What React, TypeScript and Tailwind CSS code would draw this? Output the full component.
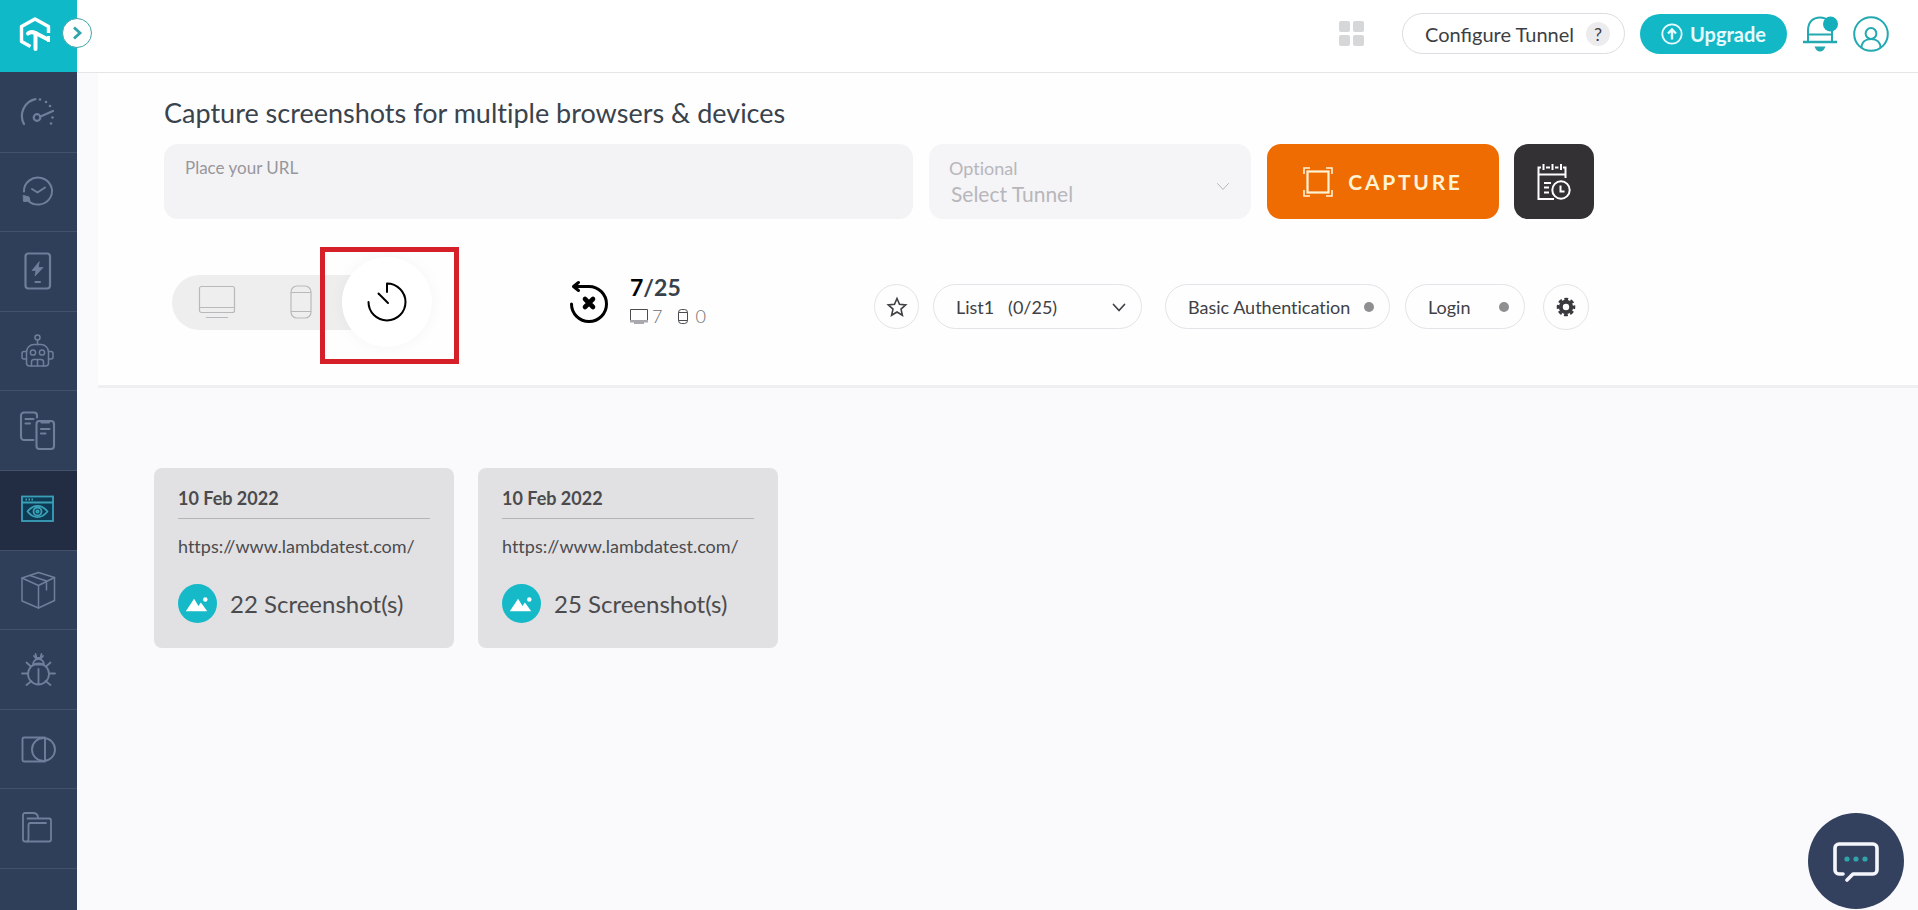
import type { ReactNode } from 'react';

type NavItem = { label: string; icon: ReactNode; active?: boolean };

const NAV_ITEMS: NavItem[] = [
  {
    label: 'Dashboard',
    icon: (
      <g strokeWidth="2.2">
        <path d="M6 32A17 17 0 0 1 17.5 7.2" />
        <circle cx="19" cy="25.5" r="3.3" />
        <path d="M22.5 24.5 35 19" />
        <g fill="currentColor" stroke="none">
          <circle cx="22" cy="7.5" r="1.3" />
          <circle cx="28" cy="10" r="1.3" />
          <circle cx="32" cy="14" r="1.3" />
          <circle cx="34.5" cy="25.5" r="1.3" />
          <circle cx="33" cy="31.5" r="1.3" />
        </g>
      </g>
    ),
  },
  {
    label: 'Real time testing',
    icon: (
      <g strokeWidth="2">
        <path d="M6 19.5A14 13.5 0 1 1 10.5 29" />
        <path d="M14 17l5.5 3.5L27 15.5" />
        <path d="M5.5 23.500 11 25l1 4-6 .5z" fill="currentColor" stroke="currentColor" strokeWidth="1" />
      </g>
    ),
  },
  {
    label: 'Real device',
    icon: (
      <g strokeWidth="2.2">
        <rect x="7.5" y="2.5" width="24.5" height="35" rx="3" />
        <path d="M21 11l-7 8.500h4L17 25l8-8.500h-4.500z" fill="currentColor" strokeWidth="0.8" />
        <path d="M17.5 31h4.500" />
      </g>
    ),
  },
  {
    label: 'Automation',
    icon: (
      <g strokeWidth="1.5">
        <circle cx="19.5" cy="6.5" r="2.5" />
        <path d="M19.5 9v4.5" />
        <path d="M8.5 21a7.5 7.5 0 0 1 7.5-7.5h7a7.5 7.5 0 0 1 7.5 7.5v11a3 3 0 0 1-3 3h-16a3 3 0 0 1-3-3z" />
        <path d="M8.5 20.500H6a2 2 0 0 0-2 2v3.500a2 2 0 0 0 2 2h2.500M30.500 20.500H33a2 2 0 0 1 2 2v3.500a2 2 0 0 1-2 2h-2.500" />
        <circle cx="15" cy="21.500" r="2.6" />
        <circle cx="24" cy="21.500" r="2.6" />
        <path d="M13.5 35v-4a2.500 2.500 0 0 1 2.500-2.500h7a2.500 2.500 0 0 1 2.500 2.500v4M19.500 28.500V35" />
      </g>
    ),
  },
  {
    label: 'App testing',
    icon: (
      <g strokeWidth="2.1">
        <path d="M15.5 29H6a3 3 0 0 1-3-3V4.500a3 3 0 0 1 3-3h10a3 3 0 0 1 3 3v2" />
        <path d="M7.500 8h8M7.500 12.500h4.500" />
        <rect x="18.500" y="10" width="17.500" height="28" rx="3" />
        <path d="M23.500 11.500h7.500M23 18h8.500M23 22.500h4.500" />
      </g>
    ),
  },
  {
    label: 'Screenshots',
    active: true,
    icon: (
      <g strokeWidth="1.8">
        <rect x="4" y="6.500" width="31" height="24.500" fill="#0f3a53" strokeLinejoin="miter" />
        <path d="M4 12.500h31" />
        <path d="M7.500 9.500h8" strokeDasharray="1.5 1.5" strokeLinecap="butt" />
        <path d="M9.500 21.500c6-7.500 14-7.500 20 0-6 7.500-14 7.500-20 0z" />
        <circle cx="19.500" cy="21.500" r="4" />
        <circle cx="19.500" cy="21.500" r="1.2" />
      </g>
    ),
  },
  {
    label: 'Builds',
    icon: (
      <g strokeWidth="1.5">
        <path d="M20.500 2.500 36.500 7.500v23L20.500 38 4 31V8z" />
        <path d="M4 8l16.500 7.500 16-8M20.500 15.500V38M12 5.500 28.500 11v9" />
      </g>
    ),
  },
  {
    label: 'Issue tracker',
    icon: (
      <g strokeWidth="1.8">
        <circle cx="20.500" cy="25" r="10.500" />
        <path d="M20.500 20v15M15 15.500a5.500 5.500 0 0 1 11 0zM17.500 5l1 4h4l1-4M16 7l2.500 3M25 7l-2.500 3" />
        <path d="M4 24.500h5.500M31.500 24.500H37M8.500 13.500l4.500 4M32.500 13.500l-4.500 4M8.500 36l5-4M32.500 36l-5-4" />
      </g>
    ),
  },
  {
    label: 'Integrations',
    icon: (
      <g strokeWidth="1.9">
        <path d="M27 8.500H6a1.500 1.500 0 0 0-1.500 1.500v21A1.500 1.500 0 0 0 6 32.500h21z" />
        <circle cx="25.500" cy="20.500" r="11.500" />
      </g>
    ),
  },
  {
    label: 'Projects',
    icon: (
      <g strokeWidth="1.8">
        <path d="M9.500 32.500H7A2 2 0 0 1 5 31V6a2 2 0 0 1 2-2h8c3 0 5 2 5 5" />
        <path d="M9.500 9.500H31a2 2 0 0 1 2 2V30.500a2 2 0 0 1-2 2H9.500a5 5 0 0 0 1-3V16a2 2 0 0 1 2-2H28" />
      </g>
    ),
  },
];

const RESULTS = [
  { date: '10 Feb 2022', url: 'https://www.lambdatest.com/', count: 22 },
  { date: '10 Feb 2022', url: 'https://www.lambdatest.com/', count: 25 },
];

function Chevron({ className }: { className: string }) {
  return (
    <svg viewBox="0 0 14 9" className={className} fill="none" stroke="currentColor" strokeLinecap="round" strokeLinejoin="round" aria-hidden="true">
      <path d="M1.5 1.5 7 7.5l5.500-6" />
    </svg>
  );
}

function MonitorIcon() {
  return (
    <svg viewBox="0 0 38 34" className="h-[34px] w-[38px]" fill="none" stroke="currentColor" strokeWidth="1.2" aria-hidden="true">
      <rect x="1.5" y="1.5" width="35" height="26" rx="2" />
      <path d="M1.500 22.500h35M8 32.500h22" />
    </svg>
  );
}

function PhoneIcon() {
  return (
    <svg viewBox="0 0 22 34" className="h-[34px] w-[22px]" fill="none" stroke="currentColor" strokeWidth="1.2" aria-hidden="true">
      <rect x="1" y="1" width="20" height="32" rx="6" />
      <path d="M1 7.500h20M1 26.500h20" />
    </svg>
  );
}

function SmallMonitorIcon() {
  return (
    <svg viewBox="0 0 18 15" className="h-[15px] w-[18px]" fill="none" aria-hidden="true">
      <path d="M.5 11V.5h17V11" stroke="#4b4b50" />
      <path d="M0 11h18v2.500H0zM4 13.500h10V15H4z" fill="#a9a9ad" />
    </svg>
  );
}

function SmallPhoneIcon() {
  return (
    <svg viewBox="0 0 10 15" className="h-[15px] w-[10px]" fill="none" stroke="#4b4b50" aria-hidden="true">
      <rect x=".5" y=".5" width="9" height="14" rx="3" />
      <path d="M.5 3.500h9M.5 11.500h9" />
    </svg>
  );
}

function Sidebar() {
  return (
    <aside className="relative flex w-[77px] shrink-0 flex-col bg-[#2f3f59]">
      <a href="#home" aria-label="Home" className="flex h-[72px] items-center justify-center bg-[#10b9c8] pr-2 pb-1">
        <svg viewBox="0 0 34 36" className="h-9 w-[34px]" fill="none" stroke="#fff" strokeWidth="3.4" strokeLinejoin="round" aria-hidden="true">
          <path d="M30.500 17V10.500L17 3 3.500 10.500v15l9 5" />
          <path d="M10 17.500c3-2.500 5-1.500 7.500-.5l12.500 6.500" strokeWidth="4" strokeLinecap="round" />
          <path d="M17.500 17v16" strokeWidth="4" strokeLinecap="round" />
          <path d="M30.500 20v6" strokeWidth="3" />
        </svg>
      </a>
      <button type="button" aria-label="Expand menu" className="absolute top-[18px] -right-[15px] z-10 flex size-[30px] items-center justify-center rounded-full border border-[#3fa5aa] bg-white text-[#2fa4ab]">
        <svg viewBox="0 0 12 14" className="h-[14px] w-3" fill="none" stroke="currentColor" strokeWidth="2.8" aria-hidden="true">
          <path d="M3 1.500 9 7l-6 5.500" />
        </svg>
      </button>
      <nav className="grid h-[797px] auto-rows-fr pt-px">
        {NAV_ITEMS.map((item) => (
          <a
            key={item.label}
            href="#nav"
            aria-label={item.label}
            className={
              item.active
                ? 'flex items-center justify-center border-b border-[#43526a] bg-[#222c42] pr-[2px] text-[#3aa0b8]'
                : 'flex items-center justify-center border-b border-[#43526a] pr-[2px] text-[#6f7f9b]'
            }
          >
            <svg viewBox="0 0 40 40" className="size-10" fill="none" stroke="currentColor" strokeLinecap="round" strokeLinejoin="round" aria-hidden="true">
              {item.icon}
            </svg>
          </a>
        ))}
      </nav>
    </aside>
  );
}

function Header() {
  return (
    <header className="flex h-[73px] items-center justify-end border-b border-[#e6e6e8] bg-white pr-[29px] pb-[5px]">
      <button type="button" aria-label="Apps" className="mr-[38px] grid grid-cols-2 gap-[3px]">
        <span className="size-[11px] rounded-xs bg-[#d6d7d9]" />
        <span className="size-[11px] rounded-xs bg-[#d6d7d9]" />
        <span className="size-[11px] rounded-xs bg-[#d6d7d9]" />
        <span className="size-[11px] rounded-xs bg-[#d6d7d9]" />
      </button>
      <button type="button" className="mr-[15px] flex h-[41px] items-center gap-3 rounded-full border border-[#dcdde0] pr-[14px] pl-[22px] text-xl text-[#3c4043]">
        Configure Tunnel
        <span className="flex size-6 items-center justify-center rounded-full bg-[#ececee] text-lg">?</span>
      </button>
      <button type="button" className="mr-[15px] flex h-10 w-[147px] items-center justify-center gap-[7px] rounded-full bg-[#12b8c6] text-xl font-bold text-[#e6fbfd]">
        <svg viewBox="0 0 22 22" className="size-[22px]" fill="none" stroke="currentColor" strokeWidth="1.8" aria-hidden="true">
          <circle cx="11" cy="11" r="9.7" />
          <path d="M11 16.500V7M7 10.500l4-4 4 4" strokeWidth="2.4" />
        </svg>
        Upgrade
      </button>
      <button type="button" aria-label="Notifications" className="mr-[15px] text-[#22a9b2]">
        <svg viewBox="0 0 36 36" className="size-9" fill="none" stroke="currentColor" strokeWidth="2" aria-hidden="true">
          <path d="M6 26V14.500C6 6 11 1.500 18 1.500S30 6 30 14.500V26M6 18.500h24" />
          <path d="M1 26h34" strokeWidth="2.4" />
          <path d="M12.500 30.500h11c-1 3-3 5-5.500 5s-4.500-2-5.500-5z" fill="currentColor" stroke="none" />
          <circle cx="28.500" cy="8" r="7.500" fill="#14afbb" stroke="none" />
        </svg>
      </button>
      <button type="button" aria-label="Account" className="text-[#22a9b2]">
        <svg viewBox="0 0 36 36" className="size-9" fill="none" stroke="currentColor" strokeWidth="2" aria-hidden="true">
          <circle cx="18" cy="18" r="16.800" />
          <circle cx="18" cy="17.500" r="5.400" />
          <path d="M8.500 32c0-6 4-9 9.500-9s9.500 3 9.500 9" />
        </svg>
      </button>
    </header>
  );
}

function CaptureForm() {
  return (
    <div className="mt-[14px] flex items-center">
      <label htmlFor="url" className="mr-4 flex h-[75px] min-w-0 flex-1 flex-col rounded-[14px] bg-[#f3f2f5] px-[21px] pt-3 text-[17px] leading-6 text-[#97979b]">
        Place your URL
        <input id="url" type="text" className="w-full bg-transparent text-xl text-[#3c4043] outline-none" />
      </label>
      <div className="relative mr-4 flex h-[75px] w-[322px] flex-col rounded-[14px] bg-[#f5f4f7] px-5 pt-3 text-[#b7b7bb]">
        <label htmlFor="tunnel" className="text-lg leading-6">Optional</label>
        <select id="tunnel" className="w-full appearance-none bg-transparent pl-[2px] text-[21px] leading-7 outline-none">
          <option>Select Tunnel</option>
        </select>
        <Chevron className="pointer-events-none absolute right-[21px] bottom-7 h-[9px] w-[14px]" />
      </div>
      <button type="button" className="mr-[15px] flex h-[75px] w-[232px] items-center justify-center gap-[15px] rounded-[14px] bg-[#ee6c02] text-[21px] font-bold tracking-[0.13em] text-[#fff3d6]">
        <svg viewBox="0 0 30 30" className="size-[30px]" fill="none" stroke="currentColor" strokeWidth="1.6" aria-hidden="true">
          <rect x="4.500" y="4.500" width="21" height="21" strokeWidth="2.2" />
          <path d="M1 7V1h6M23 1h6v6M29 23v6h-6M7 29H1v-6" />
        </svg>
        CAPTURE
      </button>
      <button type="button" aria-label="Schedule" className="flex h-[75px] w-20 items-center justify-center rounded-[14px] bg-[#333133] text-white">
        <svg viewBox="0 0 34 38" className="h-[38px] w-[34px]" fill="none" stroke="currentColor" strokeWidth="2" aria-hidden="true">
          <path d="M4 4.500H1.500V36H17M26 4.500h2.500V15M1.500 11.500h27M9 4.500h4M18 4.500h3.500M6.500 1v6M15.500 1v6M24 1v6" />
          <path d="M7 20h7M7 24.500h5M7 29.500h5" />
          <circle cx="24" cy="27" r="8.700" />
          <path d="M23.500 22.500v6h4" />
        </svg>
      </button>
    </div>
  );
}

function Controls() {
  return (
    <div className="mt-[38px] mr-[5px] ml-2 flex items-center justify-between">
      <div className="flex items-center">
        <div className="flex h-[55px] w-[216px] items-center rounded-l-full bg-[#efeeef] pl-[26px] text-[#b9b9bb]">
          <button type="button" aria-label="Desktop">
            <MonitorIcon />
          </button>
          <button type="button" aria-label="Mobile" className="ml-[54px]">
            <PhoneIcon />
          </button>
        </div>
        <div className="relative z-10 -ml-[46px]">
          <button type="button" aria-label="History" className="flex size-[90px] items-center justify-center rounded-full bg-white text-black shadow-[0_0_16px_rgba(0,0,0,0.04)]">
            <svg viewBox="0 0 40 40" className="size-10" fill="none" stroke="currentColor" strokeWidth="2" strokeLinecap="round" strokeLinejoin="round" aria-hidden="true">
              <path d="M1.500 20A18.500 18.500 0 1 0 20 1.500V10" />
              <path d="M21 21 11.500 11.500" />
            </svg>
          </button>
          <div className="pointer-events-none absolute -top-[10px] -left-[22px] h-[117px] w-[139px] border-[5px] border-[#d5202a]" />
        </div>
        <button type="button" aria-label="Clear selection" className="ml-[137px] text-black">
          <svg viewBox="0 0 42 44" className="h-11 w-[42px]" fill="none" stroke="currentColor" strokeWidth="3" strokeLinecap="round" strokeLinejoin="round" aria-hidden="true">
            <path d="M2.500 24A17.500 17.500 0 1 0 20 6.500H5M9.500 2.500 4.500 6.500l5 4" />
            <path d="m16 19 8 8M24 19l-8 8" strokeWidth="4.600" />
          </svg>
        </button>
        <div className="ml-[19px] pb-[2px]">
          <p className="text-[23px] leading-[30px] font-bold text-[#37414b]">
            <span className="text-black">7</span>/25
          </p>
          <p className="flex items-center text-lg leading-7 font-light text-[#6d6d72]">
            <SmallMonitorIcon />
            <span className="mr-4 ml-1">7</span>
            <SmallPhoneIcon />
            <span className="ml-[7px]">0</span>
          </p>
        </div>
      </div>
      <div className="flex items-center pt-[9px] text-lg text-[#3f4145]">
        <button type="button" aria-label="Favourite" className="mr-[14px] flex size-[45px] items-center justify-center rounded-full border border-[#e4e4e8]">
          <svg viewBox="0 0 22 22" className="size-[22px]" fill="none" stroke="currentColor" strokeWidth="1.6" strokeLinejoin="miter" aria-hidden="true">
            <path d="m11 2.500 2.500 5.800 6.200.6-4.700 4.200 1.400 6.200L11 16l-5.400 3.300L7 13.100 2.300 8.900l6.200-.6z" />
          </svg>
        </button>
        <div className="relative mr-[23px]">
          <select aria-label="Browser list" className="h-[45px] w-[209px] appearance-none rounded-full border border-[#e4e4e8] bg-transparent pl-[22px] outline-none">
            <option>{'List1\u00a0\u00a0\u00a0(0/25)'}</option>
          </select>
          <Chevron className="pointer-events-none absolute top-[19px] right-4 h-[9px] w-[14px] stroke-[1.7]" />
        </div>
        <button type="button" className="mr-[15px] flex h-[45px] w-[225px] items-center justify-between rounded-full border border-[#e4e4e8] pr-[15px] pl-[22px]">
          Basic Authentication
          <span className="size-[10px] rounded-full bg-[#8f8f92]" />
        </button>
        <button type="button" className="mr-[18px] flex h-[45px] w-[120px] items-center justify-between rounded-full border border-[#e4e4e8] pr-[15px] pl-[22px]">
          Login
          <span className="size-[10px] rounded-full bg-[#8f8f92]" />
        </button>
        <button type="button" aria-label="Settings" className="flex size-[46px] items-center justify-center rounded-full border border-[#e4e4e8]">
          <svg viewBox="0 0 20 20" className="size-5" fill="none" stroke="#3a3a3e" aria-hidden="true">
            <circle cx="10" cy="10" r="5.2" strokeWidth="4" />
            <circle cx="10" cy="10" r="8" strokeWidth="2.6" strokeDasharray="3.8 2.483" strokeDashoffset="1.9" />
          </svg>
        </button>
      </div>
    </div>
  );
}

function ResultCard({ date, url, count }: { date: string; url: string; count: number }) {
  return (
    <article className="h-[180px] w-[300px] rounded-lg bg-[#e1e0e2] px-6 pt-4 text-[#4b4b4e]">
      <h2 className="border-b border-[#b4b3b6] pb-[6px] text-lg leading-7 font-bold">{date}</h2>
      <p className="mt-[13px] text-lg leading-7">{url}</p>
      <div className="mt-6 flex items-center gap-[13px] text-2xl">
        <svg viewBox="0 0 40 40" className="size-[39px] shrink-0" aria-hidden="true">
          <circle cx="20" cy="20" r="20" fill="#15b9c7" />
          <path d="M8 28 16.500 15l4.500 7.500 2.500-3.500 6.500 9z" fill="#fff" />
          <circle cx="28" cy="16" r="2.300" fill="#fff" />
        </svg>
        <span>{count} Screenshot(s)</span>
      </div>
    </article>
  );
}

export default function App() {
  return (
    <div className="flex min-h-screen bg-[#fafafc] font-['Lato','Liberation_Sans',sans-serif]">
      <Sidebar />
      <div className="min-w-0 flex-1">
        <Header />
        <main className="[font-variant-ligatures:no-common-ligatures]">
          <section className="ml-[21px] border-b-[3px] border-[#efeff1] bg-[#fefeff] pt-[23px] pb-[38px] pl-[66px]">
            <div className="max-w-[1430px]">
              <h1 className="text-[27px] leading-[34px] text-[#3a434c]">Capture screenshots for multiple browsers &amp; devices</h1>
              <CaptureForm />
              <Controls />
            </div>
          </section>
          <section className="mt-20 flex flex-wrap gap-6 pl-[77px]">
            {RESULTS.map((result) => (
              <ResultCard key={result.count} {...result} />
            ))}
          </section>
        </main>
      </div>
      <button type="button" aria-label="Chat" className="fixed right-[14px] bottom-px flex size-24 items-center justify-center rounded-full bg-[#33405e]">
        <svg viewBox="0 0 46 42" className="h-[42px] w-[46px]" fill="none" stroke="#f4f6fb" strokeWidth="3.6" strokeLinecap="round" strokeLinejoin="round" aria-hidden="true">
          <path d="M10 34H6a4 4 0 0 1-4-4V8a4 4 0 0 1 4-4h34a4 4 0 0 1 4 4v22a4 4 0 0 1-4 4H20l-6 6" />
          <g fill="#2fa5ab" stroke="none">
            <circle cx="14" cy="19" r="2.600" />
            <circle cx="23" cy="19" r="2.600" />
            <circle cx="32" cy="19" r="2.600" />
          </g>
        </svg>
      </button>
    </div>
  );
}
